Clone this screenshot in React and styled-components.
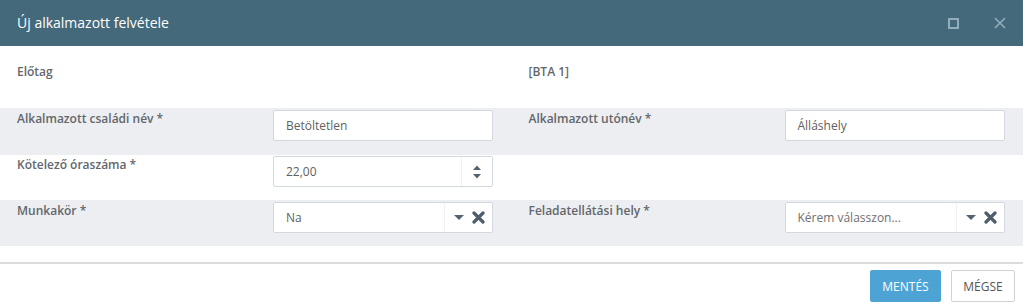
import styled, { createGlobalStyle } from "styled-components";

const Global = createGlobalStyle`
  html, body {
    margin: 0;
    padding: 0;
    background: #fff;
  }
  body {
    font-family: "Open Sans", "Liberation Sans", sans-serif;
    color: #555;
  }
`;

const Dialog = styled.div`
  width: 1023px;
  height: 307px;
  display: flex;
  flex-direction: column;
  background: #fff;
  overflow: hidden;
`;

const TitleBar = styled.div`
  height: 46px;
  flex: none;
  background: #44697b;
  display: flex;
  align-items: center;
  padding: 0 11px 0 17px;
  color: #fff;
`;

const Title = styled.div`
  flex: 1;
  font-size: 14px;
  line-height: 20px;
`;

const TitleButton = styled.button`
  border: 0;
  background: none;
  padding: 0;
  width: 24px;
  height: 24px;
  margin-left: 23px;
  display: flex;
  align-items: center;
  justify-content: center;
  color: #93aebb;
  cursor: pointer;
  svg {
    display: block;
  }
`;

const Body = styled.div`
  flex: none;
`;

const Row = styled.div`
  display: grid;
  grid-template-columns: 1fr 1fr;
  height: ${(p) => p.$h}px;
  padding-top: ${(p) => p.$top}px;
  box-sizing: border-box;
  background: ${(p) => (p.$shaded ? "#eceef1" : "#fff")};
`;

const Field = styled.div`
  display: flex;
  align-items: flex-start;
  padding-left: 17px;
`;

const Label = styled.div`
  width: 256px;
  flex: none;
  font-size: 12px;
  font-weight: 600;
  line-height: 17px;
  color: #63676c;
`;

const Control = styled.div`
  width: 220px;
  height: 31px;
  box-sizing: border-box;
  display: flex;
  align-items: stretch;
  background: #fff;
  border: 1px solid #d2d8de;
  border-radius: 2px;
`;

const Value = styled.div`
  flex: 1;
  display: flex;
  align-items: center;
  padding: 0 12px;
  font-size: 12px;
  color: ${(p) => (p.$placeholder ? "#707070" : "#5f5f5f")};
`;

const Addon = styled.div`
  width: ${(p) => p.$w}px;
  flex: none;
  display: flex;
  align-items: center;
  justify-content: ${(p) => p.$justify || "center"};
  gap: 8px;
  padding-right: ${(p) => p.$pr || 0}px;
  box-sizing: border-box;
  border-left: 1px solid #f0f1f3;
  color: #55636e;
  svg {
    display: block;
  }
`;

const Spacer = styled.div`
  height: 16px;
`;

const Footer = styled.div`
  border-top: 2px solid #dcdcdc;
  display: flex;
  justify-content: flex-end;
  gap: 10px;
  padding: 6px 8px 0 0;
`;

const Button = styled.button`
  height: 32px;
  padding: 0 ${(p) => (p.$primary ? 11 : 11)}px;
  min-width: ${(p) => (p.$primary ? 71 : 64)}px;
  font-family: "Open Sans", "Liberation Sans", sans-serif;
  font-size: 12px;
  text-transform: uppercase;
  border-radius: 2px;
  cursor: pointer;
  border: 1px solid ${(p) => (p.$primary ? "#4ca3d4" : "#cfd3d6")};
  background: ${(p) => (p.$primary ? "#4ca3d4" : "#fff")};
  color: ${(p) => (p.$primary ? "#fff" : "#555")};
`;

const Caret = () => (
  <svg width="10" height="6" viewBox="0 0 10 6">
    <path d="M0 0h10L5 5z" fill="#55636e" />
  </svg>
);

const Clear = () => (
  <svg width="13" height="13" viewBox="0 0 13 13">
    <path
      d="M2 2l9 9M11 2l-9 9"
      stroke="#4e5d69"
      strokeWidth="3.2"
      strokeLinecap="round"
    />
  </svg>
);

const Spinner = () => (
  <svg width="10" height="18" viewBox="0 0 10 18">
    <path d="M1 7h8L5 2.5z" fill="#55636e" />
    <path d="M1 11h8L5 15.5z" fill="#55636e" />
  </svg>
);

const TextInput = ({ value }) => (
  <Control>
    <Value>{value}</Value>
  </Control>
);

const NumberInput = ({ value }) => (
  <Control>
    <Value>{value}</Value>
    <Addon $w={31}>
      <Spinner />
    </Addon>
  </Control>
);

const Select = ({ value, placeholder }) => (
  <Control>
    <Value $placeholder={placeholder}>{value}</Value>
    <Addon $w={48} $justify="flex-end" $pr={7}>
      <Caret />
      <Clear />
    </Addon>
  </Control>
);

export default function App() {
  return (
    <>
      <Global />
      <Dialog>
        <TitleBar>
          <Title>Új alkalmazott felvétele</Title>
          <TitleButton aria-label="Teljes méret">
            <svg width="11" height="11" viewBox="0 0 11 11">
              <rect x="1" y="1" width="9" height="9" fill="none" stroke="currentColor" strokeWidth="2" />
            </svg>
          </TitleButton>
          <TitleButton aria-label="Bezárás">
            <svg width="12" height="12" viewBox="0 0 12 12">
              <path d="M1 1l10 10M11 1L1 11" stroke="currentColor" strokeWidth="1.6" />
            </svg>
          </TitleButton>
        </TitleBar>
        <Body>
          <Row $h={62} $top={17}>
            <Field>
              <Label>Előtag</Label>
            </Field>
            <Field>
              <Label>[BTA 1]</Label>
            </Field>
          </Row>
          <Row $shaded $h={47} $top={2}>
            <Field>
              <Label>Alkalmazott családi név *</Label>
              <TextInput value="Betöltetlen" />
            </Field>
            <Field>
              <Label>Alkalmazott utónév *</Label>
              <TextInput value="Álláshely" />
            </Field>
          </Row>
          <Row $h={45} $top={1}>
            <Field>
              <Label>Kötelező óraszáma *</Label>
              <NumberInput value="22,00" />
            </Field>
            <Field />
          </Row>
          <Row $shaded $h={46} $top={2}>
            <Field>
              <Label>Munkakör *</Label>
              <Select value="Na" />
            </Field>
            <Field>
              <Label>Feladatellátási hely *</Label>
              <Select value="Kérem válasszon..." placeholder />
            </Field>
          </Row>
          <Spacer />
        </Body>
        <Footer>
          <Button $primary>Mentés</Button>
          <Button>Mégse</Button>
        </Footer>
      </Dialog>
    </>
  );
}
